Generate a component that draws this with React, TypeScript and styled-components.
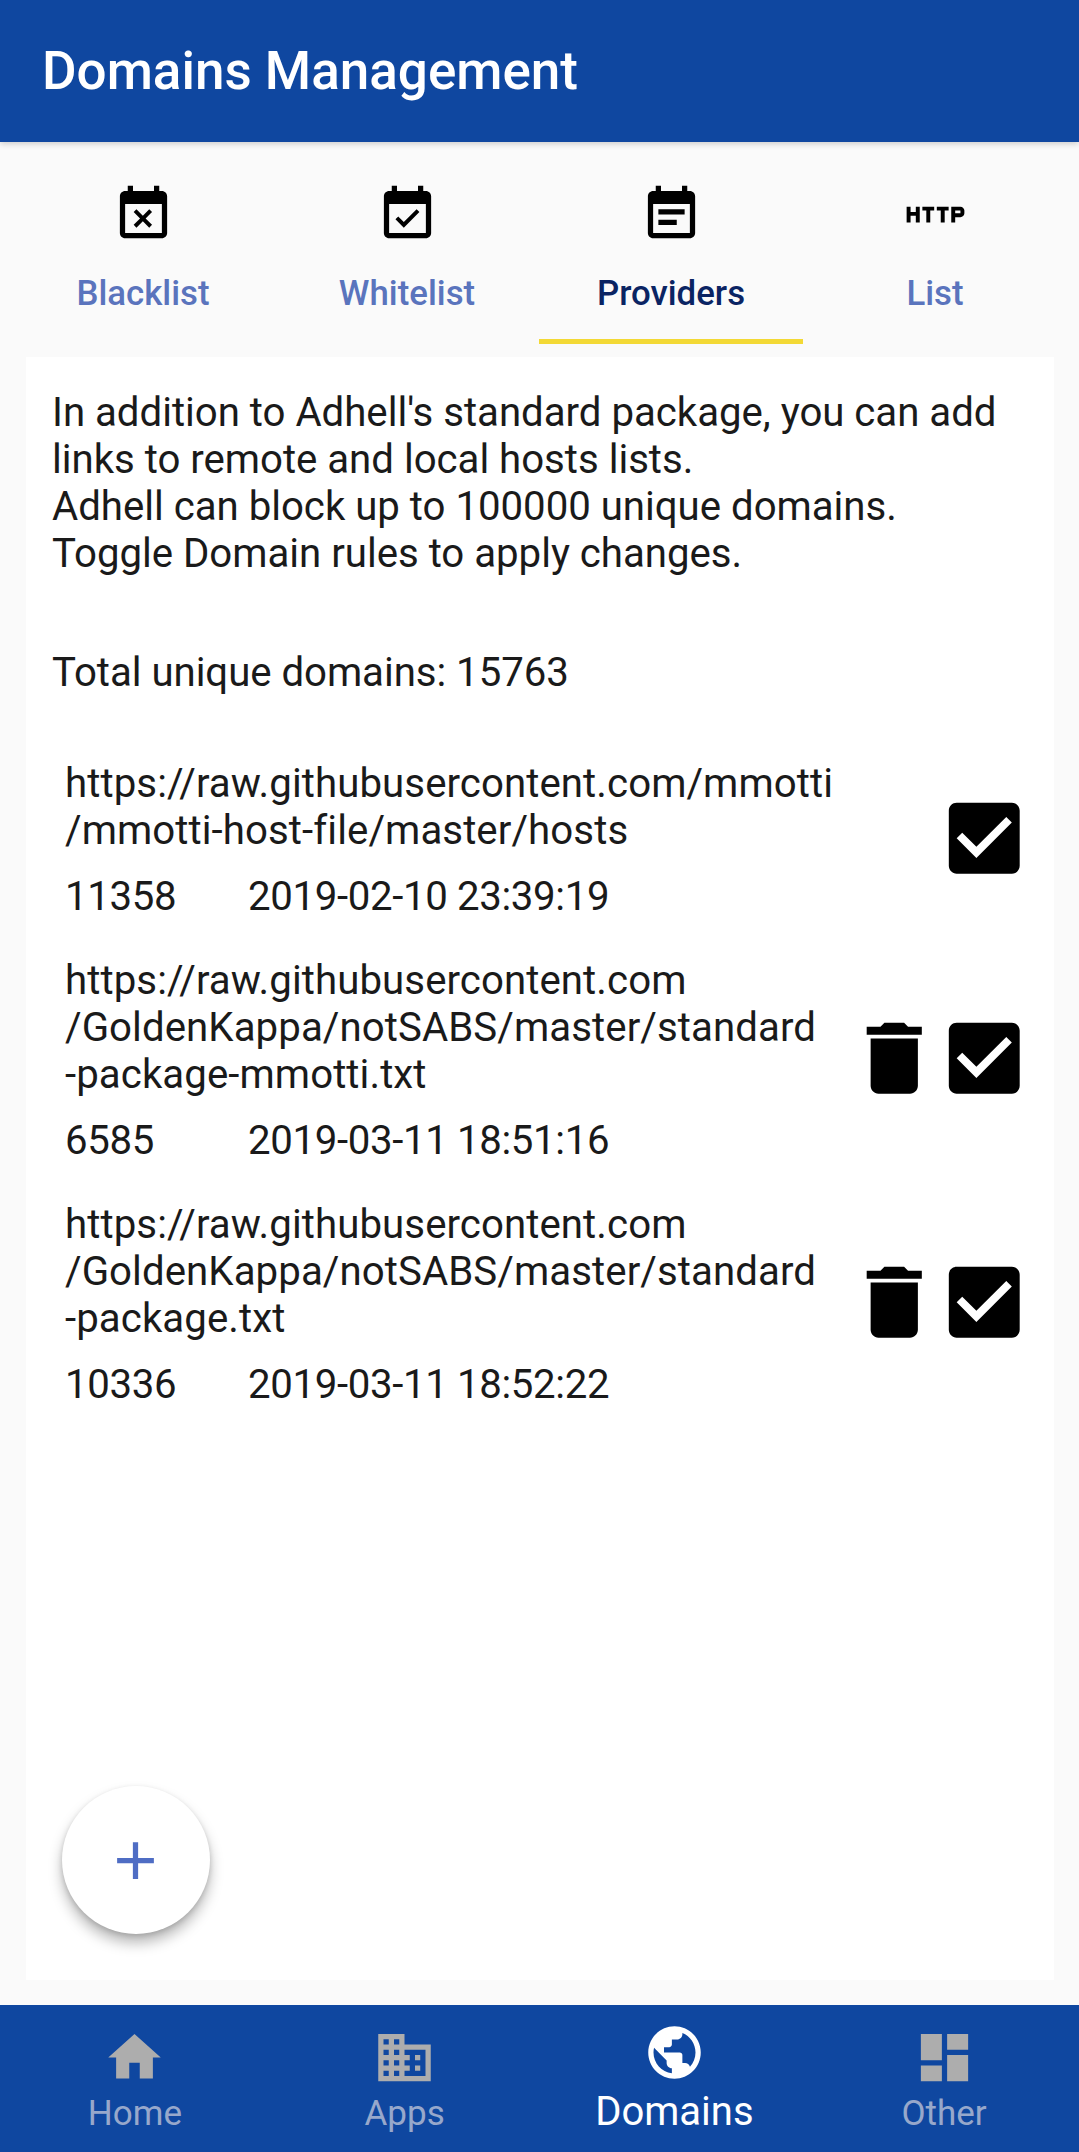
import * as React from 'react';
import styled, { createGlobalStyle } from 'styled-components';

const paths = {
  eventBusy: 'M9.31 17l2.44-2.44L14.19 17l1.06-1.06-2.44-2.44 2.44-2.44L14.19 10l-2.44 2.44L9.31 10l-1.06 1.06 2.44 2.44-2.44 2.44L9.31 17zM19 3h-1V1h-2v2H8V1H6v2H5c-1.11 0-1.99.9-1.99 2L3 19c0 1.1.89 2 2 2h14c1.1 0 2-.9 2-2V5c0-1.1-.9-2-2-2zm0 16H5V8h14v11z',
  eventAvailable: 'M16.53 11.06L15.47 10l-4.88 4.88-2.12-2.12-1.06 1.06L10.59 17l5.94-5.94zM19 3h-1V1h-2v2H8V1H6v2H5c-1.11 0-1.99.9-1.99 2L3 19c0 1.1.89 2 2 2h14c1.1 0 2-.9 2-2V5c0-1.1-.9-2-2-2zm0 16H5V8h14v11z',
  eventNote: 'M17 10H7v2h10v-2zm2-7h-1V1h-2v2H8V1H6v2H5c-1.11 0-1.99.9-1.99 2L3 19c0 1.1.89 2 2 2h14c1.1 0 2-.9 2-2V5c0-1.1-.9-2-2-2zm0 16H5V8h14v11zm-5-5H7v2h7v-2z',
  http: 'M4.5 11h-2V9H1v6h1.5v-2.5h2V15H6V9H4.5v2zm2.5-.5h1.5V15H10v-4.5h1.5V9H7v1.5zm5.5 0H14V15h1.5v-4.5H17V9h-4.5v1.5zm9-1.5H18v6h1.5v-2h2c.8 0 1.5-.7 1.5-1.5v-1c0-.8-.7-1.5-1.5-1.5zm0 2.5h-2v-1h2v1z',
  home: 'M10 20v-6h4v6h5v-8h3L12 3 2 12h3v8z',
  domain: 'M12 7V3H2v18h20V7H12zM6 19H4v-2h2v2zm0-4H4v-2h2v2zm0-4H4V9h2v2zm0-4H4V5h2v2zm4 12H8v-2h2v2zm0-4H8v-2h2v2zm0-4H8V9h2v2zm0-4H8V5h2v2zm10 12h-8v-2h2v-2h-2v-2h2v-2h-2V9h8v10zm-2-8h-2v2h2v-2zm0 4h-2v2h2v-2z',
  publicGlobe: 'M12 2C6.48 2 2 6.48 2 12s4.48 10 10 10 10-4.48 10-10S17.52 2 12 2zm-1 17.93c-3.95-.49-7-3.85-7-7.93 0-.62.08-1.21.21-1.79L9 15v1c0 1.1.9 2 2 2v1.93zm6.9-2.54c-.26-.81-1-1.39-1.9-1.39h-1v-3c0-.55-.45-1-1-1H8v-2h2c.55 0 1-.45 1-1V7h2c1.1 0 2-.9 2-2v-.41c2.93 1.19 5 4.06 5 7.41 0 2.08-.8 3.97-2.1 5.39z',
  dashboard: 'M3 13h8V3H3v10zm0 8h8v-6H3v6zm10 0h8V11h-8v10zm0-18v6h8V3h-8z',
  trash: 'M6 19c0 1.1.9 2 2 2h8c1.1 0 2-.9 2-2V7H6v12zM19 4h-3.5l-1-1h-5l-1 1H5v2h14V4z',
  checkBox: 'M19 3H5c-1.11 0-2 .9-2 2v14c0 1.1.89 2 2 2h14c1.11 0 2-.9 2-2V5c0-1.1-.89-2-2-2zm-9 14l-5-5 1.41-1.41L10 14.17l7.59-7.59L19 8l-9 9z',
  plus: 'M19 13h-6v6h-2v-6H5v-2h6V5h2v6h6v2z',
};

const GlobalStyle = createGlobalStyle`
  html, body {
    margin: 0;
    padding: 0;
    background: #fafafa;
  }
  body {
    font-family: Roboto, "Liberation Sans", sans-serif;
  }
`;

const Screen = styled.div`
  width: 1079px;
  height: 2152px;
  display: flex;
  flex-direction: column;
  background: #fafafa;
  overflow: hidden;
`;

const AppBar = styled.header`
  height: 142px;
  flex: none;
  display: flex;
  align-items: center;
  padding-left: 42px;
  box-sizing: border-box;
  background: #0f47a0;
  box-shadow: 0 2px 6px rgba(0, 0, 0, 0.18);
  color: #fff;
  font-size: 53px;
  font-weight: 500;
  position: relative;
`;

const TabBar = styled.nav`
  flex: none;
  height: 202px;
  padding: 0 12px 0 11px;
  display: grid;
  grid-template-columns: repeat(4, 1fr);
`;

const Tab = styled.div<{ $active?: boolean }>`
  display: flex;
  flex-direction: column;
  align-items: center;
  padding-top: 41px;
  box-sizing: border-box;
  color: ${p => (p.$active ? '#0a2463' : '#5a74bd')};
  font-size: 34.8px;
  font-weight: 500;
  border-bottom: 5px solid ${p => (p.$active ? '#f3d935' : 'transparent')};
`;

const TabIcon = styled.svg`
  width: 63px;
  height: 63px;
  fill: #000;
  margin-bottom: 27px;
`;

const Card = styled.main`
  flex: 1;
  position: relative;
  margin: 13px 25px 25px 26px;
  padding: 32px 26px 0;
  background: #fff;
  color: #1a1a1a;
  font-size: 40.2px;
  line-height: 47px;
`;

const Intro = styled.p`
  margin: 0;
  letter-spacing: -0.02px;
`;

const Total = styled.p`
  margin: 72px 0 0;
  letter-spacing: -0.05px;
`;

const ProviderList = styled.div`
  margin-top: 48px;
  display: flex;
  flex-direction: column;
`;

const ProviderRow = styled.div`
  display: flex;
  align-items: center;
  padding: 16px 0 21px 13px;
`;

const ProviderText = styled.div`
  flex: 1;
  white-space: nowrap;
  letter-spacing: 0.08px;
`;

const Meta = styled.div`
  display: flex;
  margin-top: 19px;
  letter-spacing: -0.35px;
`;

const Count = styled.span`
  width: 183px;
`;

const Actions = styled.div`
  display: flex;
  align-items: center;
  justify-content: flex-end;
  margin: -4px -3px 0 0;
`;

const ActionIcon = styled.svg`
  width: 94.5px;
  height: 94.5px;
  fill: #000;
  & + & {
    margin-left: -5px;
  }
`;

const Fab = styled.button`
  position: absolute;
  left: 36px;
  bottom: 46px;
  width: 148px;
  height: 148px;
  padding: 0;
  border: none;
  border-radius: 50%;
  background: #fff;
  display: flex;
  align-items: center;
  justify-content: center;
  box-shadow: 0 9px 14px rgba(0, 0, 0, 0.28), 0 2px 5px rgba(0, 0, 0, 0.14);
`;

const FabIcon = styled.svg`
  width: 63px;
  height: 63px;
  fill: #4f6dc4;
  margin-left: -1px;
`;

const BottomNav = styled.nav`
  flex: none;
  height: 147px;
  display: grid;
  grid-template-columns: repeat(4, 1fr);
  background: #0f47a0;
`;

const NavItem = styled.div<{ $active?: boolean }>`
  display: flex;
  flex-direction: column;
  align-items: center;
  padding-top: ${p => (p.$active ? '16px' : '21px')};
  color: ${p => (p.$active ? '#fff' : '#97a8cb')};
  font-size: ${p => (p.$active ? '40px' : '35px')};
  line-height: 42px;
`;

const NavIcon = styled.svg<{ $active?: boolean }>`
  width: 63px;
  height: 63px;
  fill: ${p => (p.$active ? '#fff' : '#adadad')};
  margin-bottom: ${p => (p.$active ? '7px' : '4px')};
`;

const tabs = [
  { label: 'Blacklist', icon: paths.eventBusy },
  { label: 'Whitelist', icon: paths.eventAvailable },
  { label: 'Providers', icon: paths.eventNote, active: true },
  { label: 'List', icon: paths.http },
];

const providers = [
  {
    lines: ['https://raw.githubusercontent.com/mmotti', '/mmotti-host-file/master/hosts'],
    count: '11358',
    date: '2019-02-10 23:39:19',
    removable: false,
  },
  {
    lines: ['https://raw.githubusercontent.com', '/GoldenKappa/notSABS/master/standard', '-package-mmotti.txt'],
    count: '6585',
    date: '2019-03-11 18:51:16',
    removable: true,
  },
  {
    lines: ['https://raw.githubusercontent.com', '/GoldenKappa/notSABS/master/standard', '-package.txt'],
    count: '10336',
    date: '2019-03-11 18:52:22',
    removable: true,
  },
];

const navItems = [
  { label: 'Home', icon: paths.home },
  { label: 'Apps', icon: paths.domain },
  { label: 'Domains', icon: paths.publicGlobe, active: true },
  { label: 'Other', icon: paths.dashboard },
];

export default function App() {
  return (
    <Screen>
      <GlobalStyle />
      <AppBar>Domains Management</AppBar>
      <TabBar>
        {tabs.map(tab => (
          <Tab key={tab.label} $active={tab.active}>
            <TabIcon viewBox="0 0 24 24">
              <path d={tab.icon} />
            </TabIcon>
            {tab.label}
          </Tab>
        ))}
      </TabBar>
      <Card>
        <Intro>
          In addition to Adhell's standard package, you can add
          <br />
          links to remote and local hosts lists.
          <br />
          Adhell can block up to 100000 unique domains.
          <br />
          Toggle Domain rules to apply changes.
        </Intro>
        <Total>Total unique domains: 15763</Total>
        <ProviderList>
          {providers.map(provider => (
            <ProviderRow key={provider.date}>
              <ProviderText>
                {provider.lines.map(line => (
                  <div key={line}>{line}</div>
                ))}
                <Meta>
                  <Count>{provider.count}</Count>
                  <span>{provider.date}</span>
                </Meta>
              </ProviderText>
              <Actions>
                {provider.removable && (
                  <ActionIcon viewBox="0 0 24 24">
                    <path d={paths.trash} />
                  </ActionIcon>
                )}
                <ActionIcon viewBox="0 0 24 24">
                  <path d={paths.checkBox} />
                </ActionIcon>
              </Actions>
            </ProviderRow>
          ))}
        </ProviderList>
        <Fab>
          <FabIcon viewBox="0 0 24 24">
            <path d={paths.plus} />
          </FabIcon>
        </Fab>
      </Card>
      <BottomNav>
        {navItems.map(item => (
          <NavItem key={item.label} $active={item.active}>
            <NavIcon viewBox="0 0 24 24" $active={item.active}>
              <path d={item.icon} />
            </NavIcon>
            {item.label}
          </NavItem>
        ))}
      </BottomNav>
    </Screen>
  );
}
